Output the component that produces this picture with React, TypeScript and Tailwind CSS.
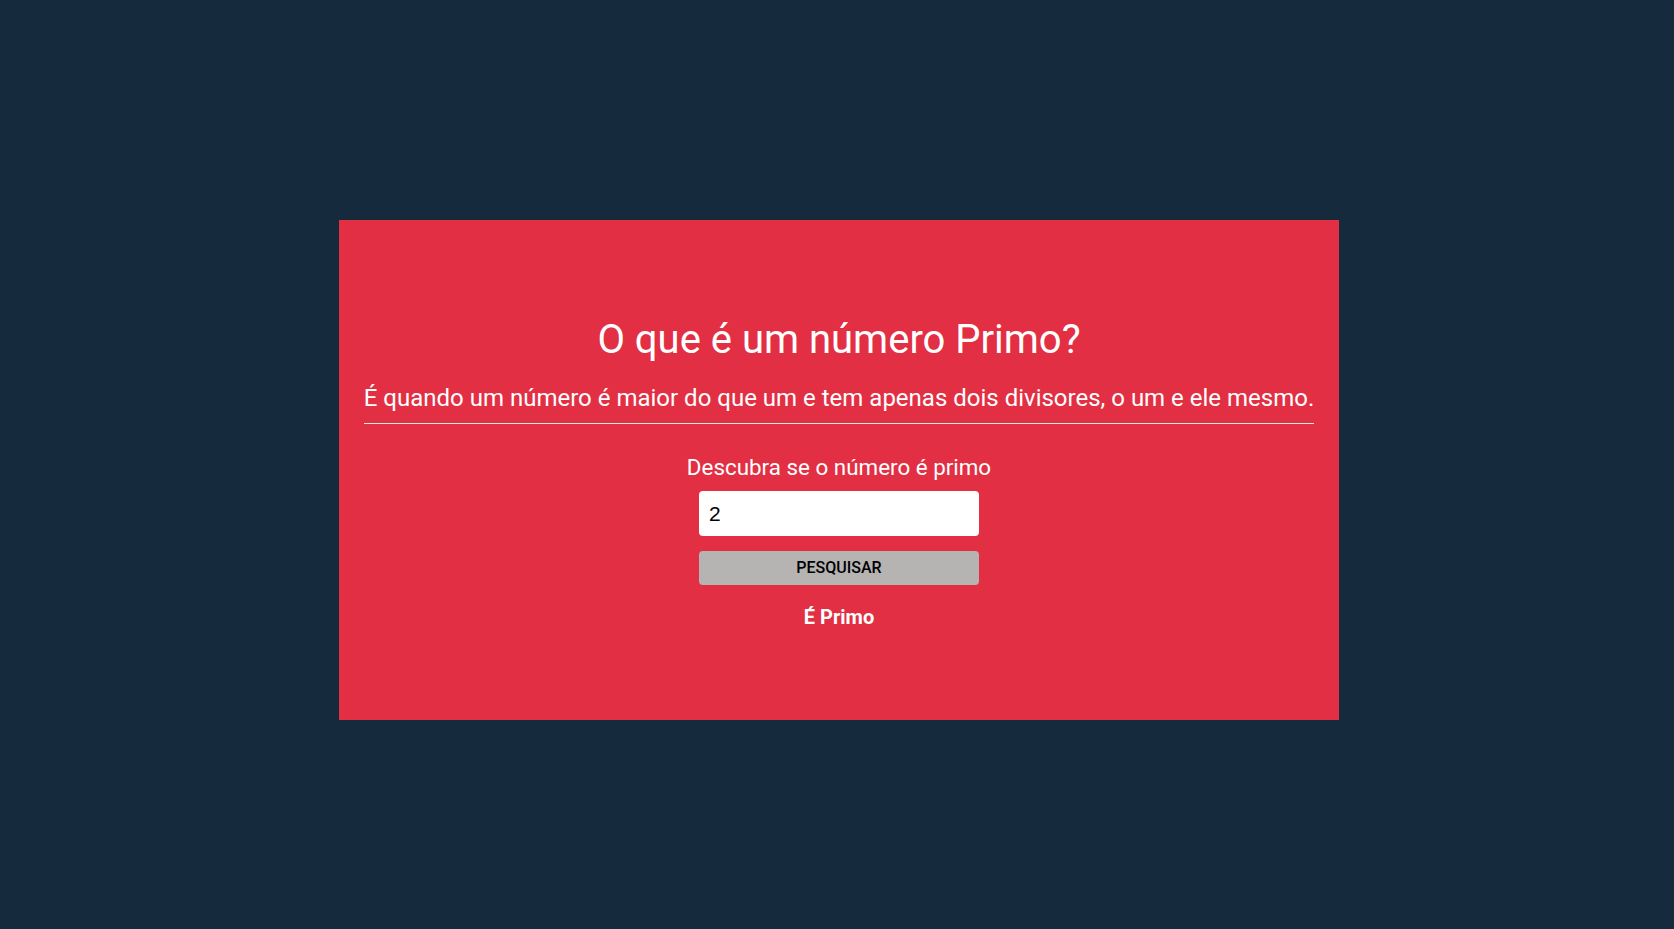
import React from "react";

export default function App() {
  return (
    <div
      className="w-full h-[929px] bg-[#162a3d] flex justify-center items-start pt-[220px] pl-[4px]"
      style={{ fontFamily: "Roboto, 'Liberation Sans', sans-serif" }}
    >
      <div className="w-[1000px] h-[500px] bg-[#e32f43] flex flex-col items-center justify-start pt-[96px] px-[25px] text-white">
        <h1 className="text-[40px] leading-[48px] font-normal">O que é um número Primo?</h1>
        <p className="mt-[20px] text-[24px] leading-[28px] pb-[11px] border-b-[1.5px] border-[#e6e6e6] whitespace-nowrap">
          É quando um número é maior do que um e tem apenas dois divisores, o um e ele mesmo.
        </p>
        <label className="mt-[30px] text-[22.4px] leading-[26px]">Descubra se o número é primo</label>
        <input
          defaultValue="2"
          autoFocus
          className="mt-[11px] w-[280px] h-[45px] rounded-[4px] bg-white px-[10px] text-[21px] text-black outline-none caret-black"
          style={{ fontFamily: "'Liberation Sans', Arial, sans-serif" }}
        />
        <button className="mt-[15px] w-[280px] h-[34px] rounded-[4px] bg-[#b6b3b3] text-black text-[16px] font-medium">
          PESQUISAR
        </button>
        <div className="mt-[20px] text-[20px] leading-[24px] font-bold">É Primo</div>
      </div>
    </div>
  );
}
